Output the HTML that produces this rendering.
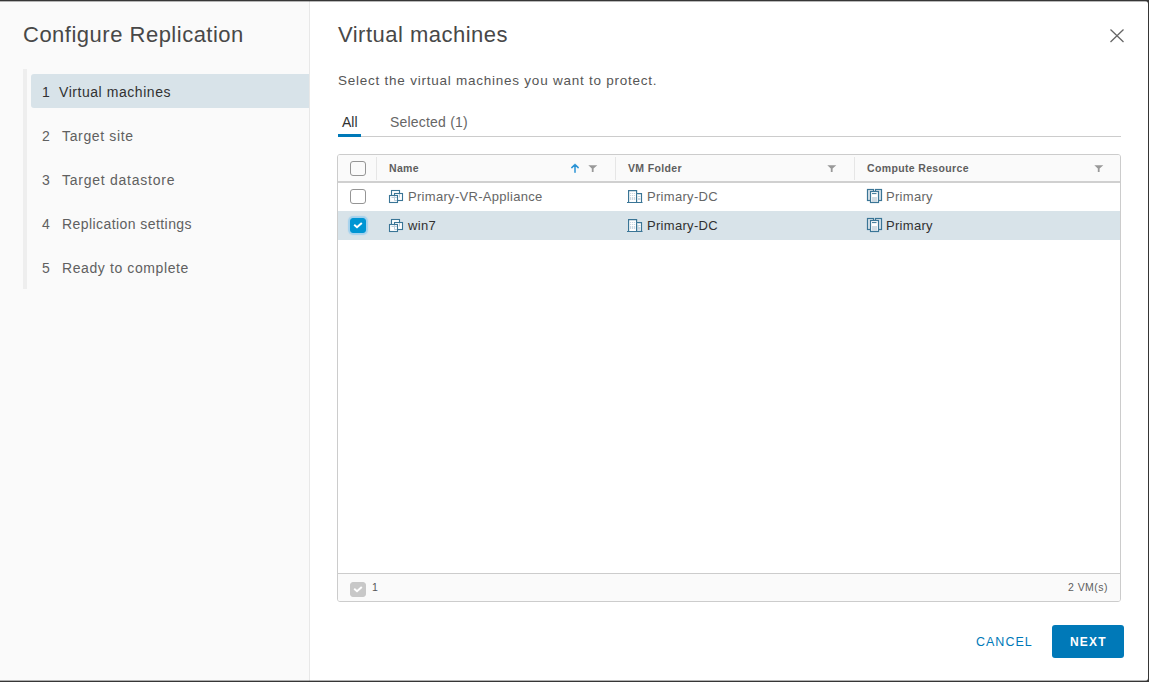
<!DOCTYPE html>
<html><head><meta charset="utf-8">
<style>
*{margin:0;padding:0;box-sizing:border-box}
html,body{width:1149px;height:682px;overflow:hidden;background:#363636}
body{font-family:"Liberation Sans",sans-serif;position:relative}
.dlg{position:absolute;left:0;top:1px;width:1148px;height:680px;background:#fff;border-radius:0 3px 3px 0;overflow:hidden}
.side{position:absolute;left:0;top:0;width:310px;height:680px;background:#fafafa;border-right:1px solid #e8e8e8}
.ic{position:absolute;display:block}
.t{position:absolute;white-space:nowrap;line-height:1}
.bar{position:absolute;left:23px;top:68px;width:4px;height:220px;background:#eeeeee}
.hl{position:absolute;left:31px;top:73px;width:278px;height:34px;background:#d8e3e9;border-radius:3px 0 0 3px}
.nav{font-size:14px;color:#606060;letter-spacing:0.55px}
.tbl{position:absolute;left:337px;top:153px;width:784px;height:448px;border:1px solid #ccc;border-radius:3px;overflow:hidden}
.hdr{position:absolute;left:0;top:0;width:782px;height:28px;background:#fafafa;border-bottom:2px solid #d0d0d0}
.sep{position:absolute;top:2px;width:1px;height:23px;background:#e6e6e6}
.cb{position:absolute;width:16px;height:15px;border:1px solid #959595;border-radius:3px;background:#fff}
.row{position:absolute;left:0;width:782px}
.ftr{position:absolute;left:0;top:418px;width:782px;height:28px;background:#fafafa;border-top:1px solid #ccc}
.th{font-size:10.5px;font-weight:bold;color:#5e5e5e;letter-spacing:0.35px}
.td{font-size:13px;color:#666;letter-spacing:0.3px}
.sel .td{color:#313131}
</style></head><body>
<div class="dlg">
  <div class="side">
    <div class="t" style="left:23px;top:23px;font-size:22px;color:#484848;letter-spacing:0.5px">Configure Replication</div>
    <div class="bar"></div>
    <div class="hl"></div>
    <div class="t nav" style="left:42px;top:84px;color:#313131">1</div>
    <div class="t nav" style="left:59px;top:84px;color:#313131">Virtual machines</div>
    <div class="t nav" style="left:42px;top:127.5px">2</div>
    <div class="t nav" style="left:62px;top:127.5px;letter-spacing:0.65px">Target site</div>
    <div class="t nav" style="left:42px;top:171.5px">3</div>
    <div class="t nav" style="left:62px;top:171.5px;letter-spacing:0.75px">Target datastore</div>
    <div class="t nav" style="left:42px;top:215.5px">4</div>
    <div class="t nav" style="left:62px;top:215.5px;letter-spacing:0.43px">Replication settings</div>
    <div class="t nav" style="left:42px;top:259.5px">5</div>
    <div class="t nav" style="left:62px;top:259.5px;letter-spacing:0.6px">Ready to complete</div>
  </div>
  <div class="t" style="left:338px;top:23px;font-size:22px;color:#484848;letter-spacing:0.48px">Virtual machines</div>
  <svg style="position:absolute;left:1108px;top:26px" width="18" height="17" viewBox="0 0 18 17"><path d="M2.5 2.5 L15.5 15 M15.5 2.5 L2.5 15" stroke="#666" stroke-width="1.3" fill="none"/></svg>
  <div class="t" style="left:338px;top:73px;font-size:13.5px;color:#565656;letter-spacing:0.76px">Select the virtual machines you want to protect.</div>
  <div class="t" style="left:342px;top:114px;font-size:14px;color:#313131">All</div>
  <div class="t" style="left:390px;top:114px;font-size:14px;color:#666;letter-spacing:0.2px">Selected (1)</div>
  <div style="position:absolute;left:338px;top:135px;width:783px;height:1px;background:#ccc"></div>
  <div style="position:absolute;left:338px;top:133px;width:23px;height:3px;background:#0079b8"></div>

  <div class="tbl">
    <div class="hdr">
      <div class="cb" style="left:12px;top:6px;background:transparent"></div>
      <div class="sep" style="left:38px"></div>
      <div class="t th" style="left:51px;top:8px">Name</div>
      <div class="sep" style="left:277px"></div>
      <div class="t th" style="left:290px;top:8px">VM Folder</div>
      <div class="sep" style="left:516px"></div>
      <div class="t th" style="left:529px;top:8px">Compute Resource</div>
    </div>
    <div class="row" style="top:28px;height:28px;background:#fff">
      <div class="cb" style="left:12px;top:6px"></div>
      <div class="t td" style="left:70px;top:7px">Primary-VR-Appliance</div>
      <div class="t td" style="left:309px;top:7px">Primary-DC</div>
      <div class="t td" style="left:548px;top:7px">Primary</div>
    </div>
    <div class="row sel" style="top:56px;height:29px;background:#d8e3e9">
      <div class="cb" style="left:12px;top:7px;background:#0095d3;border-color:#0095d3;box-shadow:0 0 1px 2px rgba(120,195,240,0.55)"></div>
      <div class="t td" style="left:70px;top:8px">win7</div>
      <div class="t td" style="left:309px;top:8px">Primary-DC</div>
      <div class="t td" style="left:548px;top:8px">Primary</div>
    </div>
    <div class="ftr">
      <div class="cb" style="left:12px;top:8px;background:#c8c8c8;border-color:#c8c8c8"></div>
      <div class="t" style="left:34px;top:8px;font-size:10.5px;color:#565656">1</div>
      <div class="t" style="left:730px;top:8px;font-size:10.5px;color:#5e5e5e;letter-spacing:0.45px">2 VM(s)</div>
    </div>
  </div>

<svg class="ic" style="left:386px;top:186px" width="20" height="20" viewBox="0 0 20 20"><g fill="#fff" stroke="#3a7596" stroke-width="1.1"><rect x="5.5" y="3.5" width="8" height="7"/><rect x="8.5" y="6.5" width="8" height="7"/><rect x="3.5" y="8.5" width="8" height="7"/></g><path d="M13.5 7V10.5M5.5 10.5H11M8.5 9V13.5H11" stroke="#bccddb" stroke-width="1" fill="none"/></svg><svg class="ic" style="left:386px;top:215px" width="20" height="20" viewBox="0 0 20 20"><g fill="#fff" stroke="#3a7596" stroke-width="1.1"><rect x="5.5" y="3.5" width="8" height="7"/><rect x="8.5" y="6.5" width="8" height="7"/><rect x="3.5" y="8.5" width="8" height="7"/></g><path d="M13.5 7V10.5M5.5 10.5H11M8.5 9V13.5H11" stroke="#bccddb" stroke-width="1" fill="none"/></svg><svg class="ic" style="left:625px;top:186px" width="20" height="20" viewBox="0 0 20 20"><g fill="#fff" stroke="#3a7596" stroke-width="1.15"><path d="M3.6 15.5V3.6H11.6V15.5"/><path d="M11.6 6.6H16.5V15.5"/><path d="M2 15.5H17.5"/></g><g fill="#cad8e2"><rect x="5" y="6" width="1.2" height="1"/><rect x="7" y="6" width="1.2" height="1"/><rect x="9" y="6" width="1.2" height="1"/><rect x="5" y="8" width="1.2" height="1"/><rect x="7" y="8" width="1.2" height="1"/><rect x="9" y="8" width="1.2" height="1"/><rect x="5" y="10" width="1.2" height="3"/><rect x="7" y="10" width="1.2" height="3"/><rect x="9" y="10" width="1.2" height="3"/><rect x="13" y="9" width="2.5" height="1"/><rect x="13" y="11" width="2.5" height="2"/></g></svg><svg class="ic" style="left:625px;top:215px" width="20" height="20" viewBox="0 0 20 20"><g fill="#fff" stroke="#3a7596" stroke-width="1.15"><path d="M3.6 15.5V3.6H11.6V15.5"/><path d="M11.6 6.6H16.5V15.5"/><path d="M2 15.5H17.5"/></g><g fill="#cad8e2"><rect x="5" y="6" width="1.2" height="1"/><rect x="7" y="6" width="1.2" height="1"/><rect x="9" y="6" width="1.2" height="1"/><rect x="5" y="8" width="1.2" height="1"/><rect x="7" y="8" width="1.2" height="1"/><rect x="9" y="8" width="1.2" height="1"/><rect x="5" y="10" width="1.2" height="3"/><rect x="7" y="10" width="1.2" height="3"/><rect x="9" y="10" width="1.2" height="3"/><rect x="13" y="9" width="2.5" height="1"/><rect x="13" y="11" width="2.5" height="2"/></g></svg><svg class="ic" style="left:864px;top:186px" width="20" height="20" viewBox="0 0 20 20"><g fill="#dde6ec" stroke="#3a7596" stroke-width="1.2"><rect x="3.5" y="2.5" width="6" height="11"/><rect x="11.5" y="2.5" width="6" height="11"/></g><rect x="6.5" y="4.5" width="8" height="11" fill="#fff" stroke="#3a7596" stroke-width="1.2"/><path d="M8 6.6H12.5" stroke="#3a7596" stroke-width="1"/><rect x="8" y="10" width="5" height="5" fill="#cfdbe3"/></svg><svg class="ic" style="left:864px;top:215px" width="20" height="20" viewBox="0 0 20 20"><g fill="#dde6ec" stroke="#3a7596" stroke-width="1.2"><rect x="3.5" y="2.5" width="6" height="11"/><rect x="11.5" y="2.5" width="6" height="11"/></g><rect x="6.5" y="4.5" width="8" height="11" fill="#fff" stroke="#3a7596" stroke-width="1.2"/><path d="M8 6.6H12.5" stroke="#3a7596" stroke-width="1"/><rect x="8" y="10" width="5" height="5" fill="#cfdbe3"/></svg><svg class="ic" style="left:569px;top:161px" width="12" height="12" viewBox="0 0 12 12"><path d="M6 2.6V10.2M2.8 5.6L6 2.5L9.2 5.6" stroke="#2a93d5" stroke-width="1.5" fill="none" stroke-linecap="round"/></svg><svg class="ic" style="left:588px;top:164px" width="10" height="8" viewBox="0 0 10 8"><path d="M0.3 0.2H9.3L5.6 3.6V7H3.8V3.6Z" fill="#999"/></svg><svg class="ic" style="left:827px;top:164px" width="10" height="8" viewBox="0 0 10 8"><path d="M0.3 0.2H9.3L5.6 3.6V7H3.8V3.6Z" fill="#999"/></svg><svg class="ic" style="left:1094px;top:164px" width="10" height="8" viewBox="0 0 10 8"><path d="M0.3 0.2H9.3L5.6 3.6V7H3.8V3.6Z" fill="#999"/></svg><svg class="ic" style="left:350px;top:217px" width="16" height="15" viewBox="0 0 16 15"><path d="M4.2 6.8L7 9.2L11.8 4.9" stroke="#fff" stroke-width="2" fill="none"/></svg><svg class="ic" style="left:350px;top:581px" width="16" height="15" viewBox="0 0 16 15"><path d="M4.2 6.8L7 9.2L11.8 4.9" stroke="#fff" stroke-width="2" fill="none"/></svg>
  <div class="t" style="left:976px;top:635px;font-size:12.5px;font-weight:normal;color:#0079b8;letter-spacing:1.0px">CANCEL</div>
  <div style="position:absolute;left:1052px;top:624px;width:72px;height:33px;background:#0079b8;border-radius:3px"></div>
  <div class="t" style="left:1070px;top:635px;font-size:12px;font-weight:bold;color:#fff;letter-spacing:1.2px">NEXT</div>
  <div style="position:absolute;left:0;top:0;width:1148px;height:1px;background:rgba(0,0,0,0.28)"></div>
  <div style="position:absolute;left:0;top:679px;width:1148px;height:1px;background:rgba(0,0,0,0.3)"></div>
</div>
</body></html>
